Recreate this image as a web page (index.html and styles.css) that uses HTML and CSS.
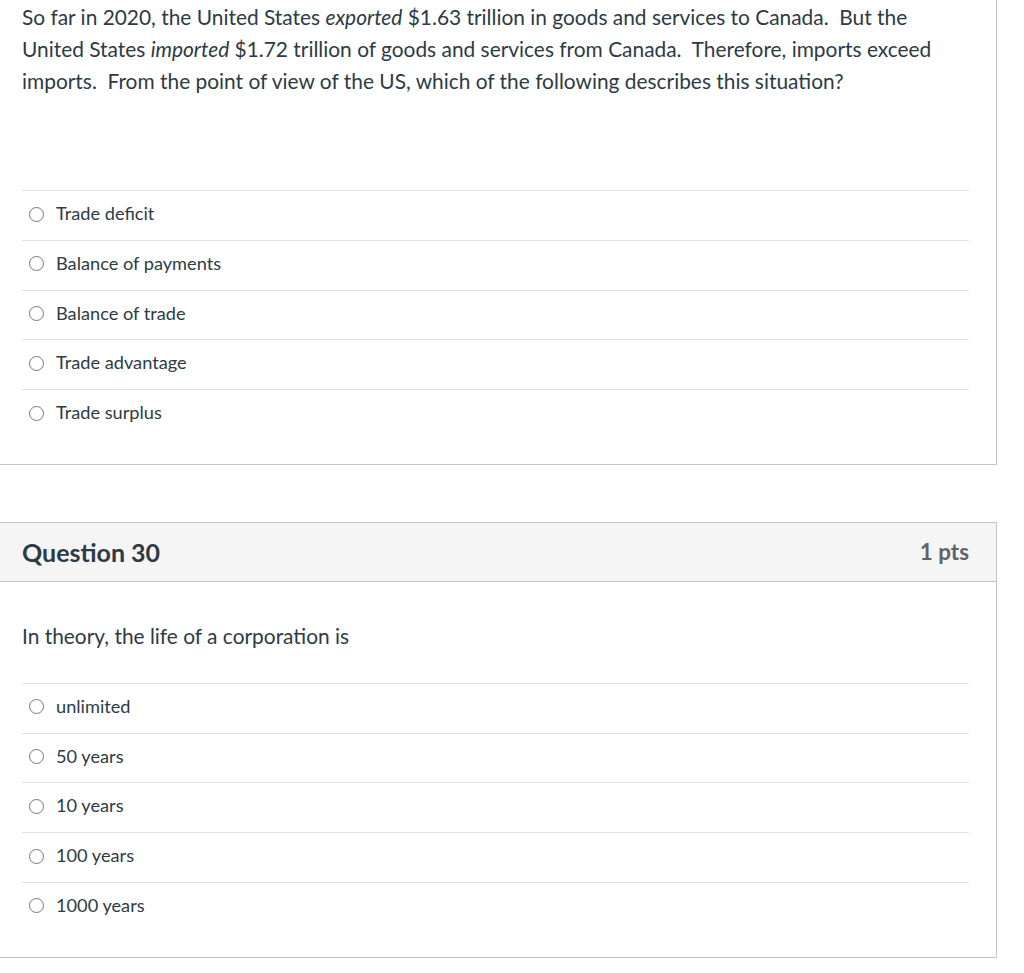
FILE: index.html
```html
<!DOCTYPE html>
<html lang="en">
<head>
<meta charset="utf-8">
<title>Quiz</title>
<link rel="stylesheet" href="styles.css">
</head>
<body>
<div class="page">
  <section class="card card-first">
    <div class="qtext qtext-first">
      <p>So far in 2020, the United States <em>exported</em> $1.63 trillion in goods and services to Canada.&nbsp; But the United States <em>imported</em> $1.72 trillion of goods and services from Canada.&nbsp; Therefore, imports exceed imports.&nbsp; From the point of view of the US, which of the following describes this situation?</p>
    </div>
    <div class="answers">
      <div class="answer"><span class="radio"></span><span class="label">Trade deficit</span></div>
      <div class="answer"><span class="radio"></span><span class="label">Balance of payments</span></div>
      <div class="answer"><span class="radio"></span><span class="label">Balance of trade</span></div>
      <div class="answer"><span class="radio"></span><span class="label">Trade advantage</span></div>
      <div class="answer"><span class="radio"></span><span class="label">Trade surplus</span></div>
    </div>
  </section>

  <section class="card">
    <header class="qheader">
      <h2 class="qtitle">Question 30</h2>
      <span class="pts">1 pts</span>
    </header>
    <div class="qtext">
      <p>In theory, the life of a corporation is</p>
    </div>
    <div class="answers">
      <div class="answer"><span class="radio"></span><span class="label">unlimited</span></div>
      <div class="answer"><span class="radio"></span><span class="label">50 years</span></div>
      <div class="answer"><span class="radio"></span><span class="label">10 years</span></div>
      <div class="answer"><span class="radio"></span><span class="label">100 years</span></div>
      <div class="answer"><span class="radio"></span><span class="label">1000 years</span></div>
    </div>
  </section>
</div>
</body>
</html>
```

FILE: styles.css
```css
html, body {
  margin: 0;
  padding: 0;
  background: #ffffff;
}

body {
  font-family: Lato, "Open Sans", "Liberation Sans", sans-serif;
  color: #2d3b45;
}

.page {
  display: flex;
  flex-direction: column;
  gap: 57px;
}

.card {
  box-sizing: border-box;
  width: 998px;
  margin-left: -1px;
  border: 1px solid #c4c4c4;
  background: #ffffff;
  padding-bottom: 25px;
}

.card-first {
  border-top: none;
}

.qheader {
  display: flex;
  align-items: center;
  justify-content: space-between;
  height: 58px;
  padding: 0 27px 0 22px;
  background: #f5f5f5;
  border-bottom: 1px solid #c4c4c4;
}

.qtitle {
  margin: 0;
  font-size: 25px;
  font-weight: 700;
  color: #2d3b45;
}

.pts {
  font-size: 22.4px;
  font-weight: 700;
  color: #5f6368;
}

.qtext {
  padding: 38px 51px 31px 22px;
}

.qtext-first {
  padding-top: 1px;
  padding-bottom: 93px;
}

.qtext p {
  margin: 0;
  font-size: 20.9px;
  line-height: 32px;
}

.answers {
  margin: 0 27px 0 22px;
}

.answer {
  display: flex;
  align-items: center;
  gap: 12px;
  border-top: 1px solid #e2e2e2;
  padding: 10px 0 14.75px 7px;
  height: 24px;
}

.radio {
  box-sizing: border-box;
  width: 15px;
  height: 15px;
  border: 1px solid #777777;
  border-radius: 50%;
  flex: none;
  margin-top: 2px;
}

.label {
  font-size: 18.2px;
  line-height: 24px;
}
```
